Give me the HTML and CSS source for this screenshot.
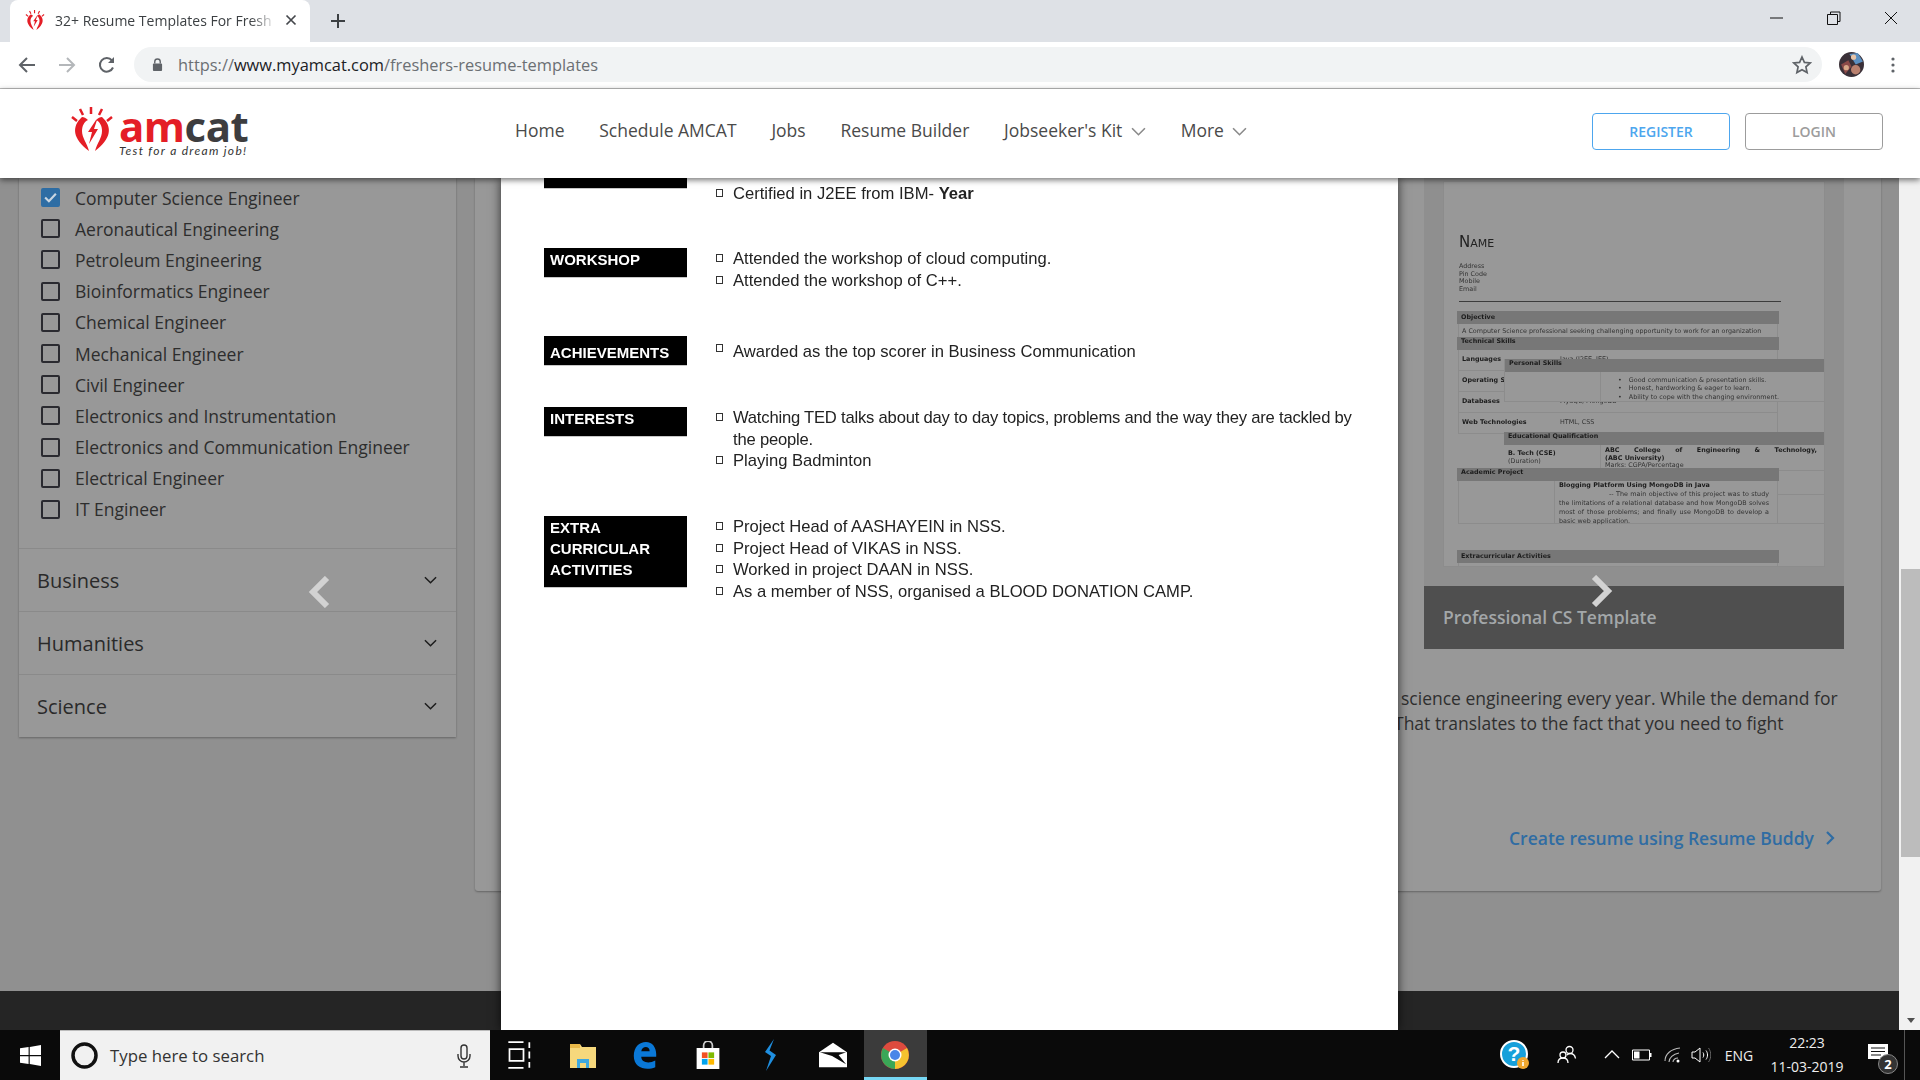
FILE: index.html
```html
<!DOCTYPE html>
<html lang="en">
<head>
  <meta charset="UTF-8">
  <title>32+ Resume Templates For Freshers</title>
  <link rel="stylesheet" href="styles.css">
</head>
<body>
  <svg class="defs" width="0" height="0">
    <symbol id="bulb" viewBox="0 0 42 44">
      <path d="M20 0v7M9 2l3 6M31 2l-3 6M1 10l5 4M41 10l-5 4" stroke="#e41e26" stroke-width="2.500" fill="none"/>
      <path d="M11 10C0 20 2 32 18 44 16 36 11 31 11 24c0-5 2-9 6-11-2-2-4-3-6-3z" fill="#e41e26"/>
      <path d="M31 10c11 10 9 22-7 34 2-8 7-13 7-20 0-5-2-9-6-11 2-2 4-3 6-3z" fill="#e41e26"/>
      <path d="M25 13l-8 12h4l-3 12 9-15h-4l3-9z" fill="#e41e26"/>
    </symbol>
  </svg>

  <div class="tabbar">
    <div class="tab">
      <svg class="favicon"><use href="#bulb"/></svg>
      <span class="tab-title">32+ Resume Templates For Fresh</span>
      <svg class="tab-close" viewBox="0 0 12 12"><path d="M1.500 1.500l9 9M10.500 1.500l-9 9" stroke="#45484c" stroke-width="1.700"/></svg>
    </div>
    <svg class="tab-new" viewBox="0 0 16 16"><path d="M8 1v14M1 8h14" stroke="#3c4043" stroke-width="2"/></svg>
    <div class="win-btns">
      <svg viewBox="0 0 14 14"><path d="M0 7h13" stroke="#111" stroke-width="1"/></svg>
      <svg viewBox="0 0 14 14"><path d="M3.500 3.500V1h9.500v9.500H10.500M.5 3.500h10v10H.5z" stroke="#111" fill="none"/></svg>
      <svg viewBox="0 0 14 14"><path d="M1 1l12 12M13 1L1 13" stroke="#111" fill="none"/></svg>
    </div>
  </div>

  <div class="toolbar">
    <svg class="tb-icon" viewBox="0 0 18 18"><path d="M17 9H2.500M9 2L2 9l7 7" stroke="#5f6368" stroke-width="2" fill="none"/></svg>
    <svg class="tb-icon" viewBox="0 0 18 18"><path d="M1 9h14.500M9 2l7 7-7 7" stroke="#b4b7ba" stroke-width="2" fill="none"/></svg>
    <svg class="tb-icon" viewBox="0 0 18 18"><path d="M15 11.500A6.800 6.800 0 1 1 14 4.500" stroke="#5f6368" stroke-width="2" fill="none"/><path d="M16 1v6h-6z" fill="#5f6368"/></svg>
    <div class="omnibox">
      <svg class="lock" viewBox="0 0 12 16"><path d="M3 7V5a3 3 0 0 1 6 0v2" stroke="#5f6368" stroke-width="1.500" fill="none"/><rect x="1" y="7" width="10" height="8" rx="1" fill="#5f6368"/></svg>
      <span class="url">https://<b>www.myamcat.com</b>/freshers-resume-templates</span>
      <svg class="star" viewBox="0 0 20 20"><path d="M10 2l2.400 5.400 5.800.6-4.300 3.900 1.200 5.700L10 14.700l-5.100 2.900 1.200-5.700L1.800 8l5.800-.6z" stroke="#5f6368" stroke-width="1.700" fill="none"/></svg>
    </div>
    <svg class="avatar" viewBox="0 0 24 24">
      <circle cx="12" cy="12" r="12" fill="#3a3038"/>
      <path d="M10 2l8-1 5 8-7 3z" fill="#5b8fc0"/>
      <path d="M2 12l7-4 3 6-6 7z" fill="#8a4a48"/>
      <circle cx="16" cy="17" r="4.500" fill="#b9806e"/>
      <circle cx="14" cy="5" r="2.500" fill="#e8c4a8"/>
      <circle cx="7" cy="15" r="2.500" fill="#d8a888"/>
    </svg>
    <svg class="menu-dots" viewBox="0 0 4 16"><circle cx="2" cy="2" r="1.600" fill="#5f6368"/><circle cx="2" cy="8" r="1.600" fill="#5f6368"/><circle cx="2" cy="14" r="1.600" fill="#5f6368"/></svg>
  </div>

  <header class="sitehead">
    <a class="logo">
      <svg class="logo-bulb"><use href="#bulb"/></svg>
      <div class="logo-words">
        <div class="logo-name"><span>am</span>cat</div>
        <div class="logo-tag">Test for a dream job!</div>
      </div>
    </a>
    <nav class="nav">
      <a>Home</a>
      <a>Schedule AMCAT</a>
      <a>Jobs</a>
      <a>Resume Builder</a>
      <a>Jobseeker's Kit <svg class="nav-caret" viewBox="0 0 14 8"><path d="M1 1l6 6 6-6" stroke="#8a8a8a" stroke-width="1.500" fill="none"/></svg></a>
      <a>More <svg class="nav-caret" viewBox="0 0 14 8"><path d="M1 1l6 6 6-6" stroke="#8a8a8a" stroke-width="1.500" fill="none"/></svg></a>
    </nav>
    <div class="head-btns">
      <button class="btn btn-reg">REGISTER</button>
      <button class="btn btn-login">LOGIN</button>
    </div>
  </header>

  <div class="viewport">
    <div class="page">
      <div class="page-main">
        <aside class="sidebar">
          <ul class="checks">
            <li class="checked"><i><svg viewBox="0 0 14 14"><path d="M2 7l3.500 3.500L12 3.500" stroke="#c9d6e2" stroke-width="2" fill="none"/></svg></i>Computer Science Engineer</li>
            <li><i></i>Aeronautical Engineering</li>
            <li><i></i>Petroleum Engineering</li>
            <li><i></i>Bioinformatics Engineer</li>
            <li><i></i>Chemical Engineer</li>
            <li><i></i>Mechanical Engineer</li>
            <li><i></i>Civil Engineer</li>
            <li><i></i>Electronics and Instrumentation</li>
            <li><i></i>Electronics and Communication Engineer</li>
            <li><i></i>Electrical Engineer</li>
            <li><i></i>IT Engineer</li>
          </ul>
          <div class="acc">Business <svg viewBox="0 0 14 8"><path d="M1 1l6 6 6-6" stroke="#1c1c1c" stroke-width="1.600" fill="none"/></svg></div>
          <div class="acc">Humanities <svg viewBox="0 0 14 8"><path d="M1 1l6 6 6-6" stroke="#1c1c1c" stroke-width="1.600" fill="none"/></svg></div>
          <div class="acc">Science <svg viewBox="0 0 14 8"><path d="M1 1l6 6 6-6" stroke="#1c1c1c" stroke-width="1.600" fill="none"/></svg></div>
        </aside>

        <main class="content">
          <div class="preview">
            <div class="preview-band">
              <div class="resume">
                <div class="rs-name">Name</div>
                <div class="rs-contact">Address<br>Pin Code<br>Mobile<br>Email</div>
                <div class="rs-rule"></div>
                <div class="rs-head rs-objective">Objective</div>
                <div class="rs-obj">A Computer Science professional seeking challenging opportunity to work for an organization</div>
                <div class="rs-head">Technical Skills</div>
                <div class="rs-row"><b>Languages</b><span>Java (J2EE, JEE)</span></div>
                <div class="rs-row"><b>Operating Systems</b><span>Windows</span></div>
                <div class="rs-row"><b>Databases</b><span>MySQL, MongoDB</span></div>
                <div class="rs-row"><b>Web Technologies</b><span>HTML, CSS</span></div>
                <div class="rs-head rs-academic">Academic Project</div>
                <div class="rs-project">
                  <div class="rs-project-text">
                    <b>Blogging Platform Using MongoDB in Java</b>
                    <p>-- The main objective of this project was to study the limitations of a relational database and how MongoDB solves most of those problems; and finally use MongoDB to develop a basic web application.</p>
                  </div>
                </div>
                <div class="rs-head rs-extra">Extracurricular Activities</div>
                <div class="rs-row rs-extra-row"></div>

                <section class="rs-over rs-personal">
                  <div class="rs-head">Personal Skills</div>
                  <div class="rs-over-body">
                    <ul>
                      <li>Good communication &amp; presentation skills.</li>
                      <li>Honest, hardworking &amp; eager to learn.</li>
                      <li>Ability to cope with the changing environment.</li>
                    </ul>
                  </div>
                </section>
                <section class="rs-over rs-edu">
                  <div class="rs-head">Educational Qualification</div>
                  <div class="rs-edu-row">
                    <div><b>B. Tech (CSE)</b><br>(Duration)</div>
                    <div><b class="rs-just">ABC College of Engineering &amp; Technology,</b><b>(ABC University)</b><br>Marks: CGPA/Percentage</div>
                  </div>
                  <div class="rs-edu-blank"></div>
                </section>
              </div>
            </div>
            <div class="preview-cap">Professional CS Template</div>
          </div>

          <p class="intro">
            <span>science engineering every year. While the demand for</span>
            <span class="intro-2">That translates to the fact that you need to fight</span>
          </p>
          <a class="create-link">Create resume using Resume Buddy
            <svg viewBox="0 0 10 16"><path d="M2 2l6 6-6 6" stroke="#2f6ca3" stroke-width="2.200" fill="none"/></svg>
          </a>
        </main>
      </div>
      <div class="sitefoot"></div>

      <svg class="car-arrow car-prev" viewBox="0 0 22 32"><path d="M19 2L5 16l14 14" stroke="#d2d2d2" stroke-width="6" fill="none"/></svg>
      <svg class="car-arrow car-next" viewBox="0 0 22 32"><path d="M3 2l14 14L3 30" stroke="#d2d2d2" stroke-width="6" fill="none"/></svg>

      <div class="modal">
        <div class="doc">
          <div class="doc-row doc-first">
            <div class="doc-label"></div>
            <ul class="doc-list"><li><span>Certified in J2EE from IBM- <b>Year</b></span></li></ul>
          </div>
          <div class="doc-row">
            <div class="doc-label">WORKSHOP</div>
            <ul class="doc-list">
              <li><span>Attended the workshop of cloud computing.</span></li>
              <li><span>Attended the workshop of C++.</span></li>
            </ul>
          </div>
          <div class="doc-row doc-achieve">
            <div class="doc-label">ACHIEVEMENTS</div>
            <ul class="doc-list"><li><span>Awarded as the top scorer in Business Communication</span></li></ul>
          </div>
          <div class="doc-row doc-interests">
            <div class="doc-label">INTERESTS</div>
            <ul class="doc-list">
              <li><span class="doc-tight">Watching TED talks about day to day topics, problems and the way they are tackled by the people.</span></li>
              <li><span>Playing Badminton</span></li>
            </ul>
          </div>
          <div class="doc-row">
            <div class="doc-label doc-label-tall">EXTRA<br>CURRICULAR<br>ACTIVITIES</div>
            <ul class="doc-list">
              <li><span>Project Head of AASHAYEIN in NSS.</span></li>
              <li><span>Project Head of VIKAS in NSS.</span></li>
              <li><span>Worked in project DAAN in NSS.</span></li>
              <li><span>As a member of NSS, organised a BLOOD DONATION CAMP.</span></li>
            </ul>
          </div>
        </div>
      </div>
    </div>

    <div class="scrollbar">
      <div class="thumb"></div>
      <div class="scroll-down"></div>
    </div>
  </div>

  <footer class="taskbar">
    <div class="start">
      <svg viewBox="0 0 22 22"><path d="M0 3.500l9-1.300v8.300H0zM10.200 2l11.800-2v10.500H10.200zM0 11.700h9V20L0 18.700zM10.200 11.700H22V22l-11.800-2z" fill="#fff"/></svg>
    </div>
    <div class="search">
      <svg class="cortana" viewBox="0 0 27 27"><circle cx="13.500" cy="13.500" r="11.500" stroke="#111" stroke-width="3.500" fill="none"/></svg>
      <span>Type here to search</span>
      <svg class="mic" viewBox="0 0 14 24"><rect x="4" y="1" width="6" height="14" rx="3" stroke="#333" stroke-width="1.400" fill="none"/><path d="M1 10v2a6 6 0 0 0 12 0v-2M7 18v4M3 23h8" stroke="#333" stroke-width="1.400" fill="none"/></svg>
    </div>
    <div class="task-apps">
      <div class="app"><svg viewBox="0 0 20 24"><path d="M0 1h13M0 23h13M1 7h12v10H1zM18 1v5M18 9v6M18 18v5" stroke="#fff" stroke-width="1.500" fill="none"/></svg></div>
      <div class="app"><svg viewBox="0 0 28 28"><path d="M1 3h10l2 3h14v21H1z" fill="#f6d87c"/><path d="M1 3h10v4H1z" fill="#e9b949"/><path d="M8 27v-9h12v9h-3v-5h-6v5z" fill="#3fa9e0"/></svg></div>
      <div class="app"><svg viewBox="0 0 26 30"><path d="M1 16C1 6 7 1 14 1c7 0 11 6 11 13v3H9c0 6 8 8 15 4v7c-10 4-23 1-23-12zM9 11h9c0-6-8-6-9 0z" fill="#0a78d7"/></svg></div>
      <div class="app"><svg viewBox="0 0 28 32"><path d="M9 9V5a5 5 0 0 1 10 0v4" stroke="#ccc" stroke-width="2" fill="none"/><rect x="1" y="8" width="26" height="24" fill="#fff"/><rect x="7" y="13" width="6.500" height="6.500" fill="#f25022"/><rect x="14.500" y="13" width="6.500" height="6.500" fill="#7fba00"/><rect x="7" y="20.500" width="6.500" height="6.500" fill="#00a4ef"/><rect x="14.500" y="20.500" width="6.500" height="6.500" fill="#ffb900"/></svg></div>
      <div class="app app-bolt"><svg viewBox="0 0 16 32"><path d="M12 0L3 13l6 4-5 15L14 16 7.500 11.500z" fill="#1f8fe0"/></svg></div>
      <div class="app"><svg viewBox="0 0 30 26"><path d="M0 10L15 0l15 10v16H0z" fill="#fff"/><path d="M1 10h28l-8 3 8 10-15-9z" fill="#0a0a0a"/></svg></div>
      <div class="app app-on"><svg viewBox="0 0 28 28"><circle cx="14" cy="14" r="14" fill="#dd4b3e"/><path d="M14 14L26 7A14 14 0 0 1 14 28z" fill="#f5c22f"/><path d="M14 14L14 28A14 14 0 0 1 2 7z" fill="#3aa757"/><circle cx="14" cy="14" r="6.500" fill="#fff"/><circle cx="14" cy="14" r="5" fill="#4a86e8"/></svg></div>
    </div>
    <div class="tray">
      <div class="tray-help"><svg viewBox="0 0 30 30"><circle cx="14" cy="14" r="13" fill="#17a0da" stroke="#fff" stroke-width="2"/><text x="14" y="21" text-anchor="middle" class="help-q">?</text><circle cx="23" cy="23" r="6" fill="#f0a830"/><path d="M23 20v.800M23 22v4" stroke="#fff" stroke-width="1.600"/></svg></div>
      <div class="tray-people"><svg viewBox="0 0 20 20"><circle cx="12.500" cy="5" r="3.500" stroke="#fff" stroke-width="1.300" fill="none"/><circle cx="6" cy="10" r="3" stroke="#fff" stroke-width="1.300" fill="none"/><path d="M1 18c0-3 2-5 5-5s5 2 5 5M10 10c1-1 2-1.500 3-1.500 3 0 5 2 5.500 5" stroke="#fff" stroke-width="1.300" fill="none"/></svg></div>
      <div class="tray-chev"><svg viewBox="0 0 16 10"><path d="M1 8l7-7 7 7" stroke="#fff" stroke-width="1.300" fill="none"/></svg></div>
      <div class="tray-batt"><svg viewBox="0 0 20 12"><path d="M.5 1h17v10H.5z" stroke="#fff" fill="none"/><rect x="2" y="2.500" width="5.500" height="7" fill="#fff"/><rect x="18" y="4" width="1.500" height="4" fill="#fff"/></svg></div>
      <div class="tray-wifi"><svg viewBox="0 0 18 16"><path d="M1 14C1 7 7 2 16 1M5 15c0-4 4-8 10-9M9 15c0-2 2-4 5-4" stroke="#bbb" stroke-width="1.100" fill="none"/><circle cx="14" cy="14" r="1.500" fill="#fff"/></svg></div>
      <div class="tray-vol"><svg viewBox="0 0 20 16"><path d="M1 5h3l5-4v14l-5-4H1z" stroke="#fff" fill="none"/><path d="M12 5.500c1 1.500 1 3.500 0 5M15 3.500c2 2.500 2 6.500 0 9" stroke="#fff" fill="none"/><path d="M17.500 1c3 4 3 10 0 14" stroke="#666" fill="none"/></svg></div>
      <div class="tray-eng">ENG</div>
      <div class="tray-clock"><span>22:23</span><span>11-03-2019</span></div>
      <div class="tray-notif">
        <svg viewBox="0 0 20 18"><path d="M0 0h20v15H0z" fill="#fff"/><path d="M3 4h14M3 7.500h14M3 11h10" stroke="#111" stroke-width="1.100"/></svg>
        <span class="notif-badge">2</span>
      </div>
      <div class="tray-show"></div>
    </div>
  </footer>
</body>
</html>
```

FILE: styles.css
```css
* {
  box-sizing: border-box;
}
html, body {
  margin: 0;
  height: 1080px;
  overflow: hidden;
}
body {
  width: 1920px;
  display: flex;
  flex-direction: column;
  font-family: "Open Sans", "Liberation Sans", sans-serif;
  background: #fff;
}
ul {
  margin: 0;
  padding: 0;
  list-style: none;
}
.defs {
  position: absolute;
}

/* browser chrome */
.tabbar {
  height: 42px;
  background: #dee1e6;
  display: flex;
  align-items: flex-end;
  padding-left: 10px;
  flex: none;
}
.tab {
  width: 300px;
  height: 42px;
  background: #fff;
  border-radius: 8px 8px 0 0;
  display: flex;
  align-items: center;
  padding: 0 0 2px 15px;
}
.favicon {
  width: 20px;
  height: 20px;
  flex: none;
}
.tab-title {
  width: 222px;
  margin-left: 10px;
  font-size: 14px;
  color: #3c4043;
  white-space: nowrap;
  overflow: hidden;
  -webkit-mask-image: linear-gradient(to right, #000 88%, transparent);
  mask-image: linear-gradient(to right, #000 88%, transparent);
}
.tab-close {
  width: 12px;
  height: 12px;
  margin-left: 8px;
}
.tab-new {
  width: 16px;
  height: 16px;
  margin: 0 0 13px 20px;
}
.win-btns {
  margin-left: auto;
  height: 42px;
  display: flex;
  align-items: center;
  padding: 0 22px 6px 0;
  gap: 43px;
}
.win-btns svg {
  width: 14px;
  height: 14px;
}
.toolbar {
  height: 47px;
  background: #fff;
  border-bottom: 1px solid #bcbcbc;
  display: flex;
  align-items: center;
  padding: 0 0 1px 18px;
  flex: none;
}
.tb-icon {
  width: 18px;
  height: 18px;
  margin-right: 22px;
}
.omnibox {
  width: 1688px;
  height: 35px;
  margin-left: -4px;
  background: #f1f3f4;
  border-radius: 18px;
  display: flex;
  align-items: center;
  padding-left: 18px;
}
.lock {
  width: 11px;
  height: 15px;
}
.url {
  margin-left: 15px;
  font-size: 16.400px;
  color: #6b6f73;
}
.url b {
  font-weight: 400;
  color: #202124;
}
.star {
  width: 20px;
  height: 20px;
  margin-left: auto;
  margin-right: 10px;
}
.avatar {
  width: 25px;
  height: 25px;
  margin-left: 17px;
}
.menu-dots {
  width: 4px;
  height: 16px;
  margin-left: 27px;
}

/* site header */
.sitehead {
  height: 89px;
  background: #fff;
  display: flex;
  align-items: center;
  flex: none;
  position: relative;
  z-index: 5;
  box-shadow: 0 2px 6px rgba(0, 0, 0, 0.55);
}
.logo {
  display: flex;
  margin-left: 71px;
  width: 180px;
  flex: none;
  align-items: flex-start;
  padding-bottom: 4px;
}
.logo-bulb {
  width: 42px;
  height: 44px;
  flex: none;
}
.logo-words {
  margin-left: 6px;
}
.logo-name {
  font-size: 42px;
  font-weight: 700;
  line-height: 37px;
  color: #3d3d3f;
  letter-spacing: -0.5px;
}
.logo-name span {
  color: #e41e26;
}
.logo-tag {
  font-family: Lato, "Open Sans", sans-serif;
  font-style: italic;
  font-size: 12px;
  line-height: 12px;
  letter-spacing: 1.300px;
  color: #333;
  white-space: nowrap;
  margin-top: 1px;
}
.nav {
  margin-left: 264px;
  display: flex;
  gap: 34.800px;
  font-size: 17.500px;
  color: #4a4a4a;
  padding-bottom: 7px;
}
.nav a {
  white-space: nowrap;
}
.nav-caret {
  width: 15px;
  height: 9px;
  margin-left: 4px;
  vertical-align: 1px;
}
.head-btns {
  margin-left: auto;
  margin-right: 37px;
  display: flex;
  gap: 15px;
  padding-bottom: 4px;
}
.btn {
  width: 138px;
  height: 37px;
  background: #fff;
  border-radius: 4px;
  font-family: inherit;
  font-size: 14px;
  font-weight: 600;
  padding: 0;
}
.btn-reg {
  border: 1px solid #4da6ee;
  color: #4da6ee;
}
.btn-login {
  border: 1px solid #9c9c9c;
  color: #9c9c9c;
}

/* dimmed page */
.viewport {
  flex: 1;
  display: flex;
  min-height: 0;
}
.page {
  flex: 1;
  position: relative;
  overflow: hidden;
  background: #909090;
  display: flex;
  flex-direction: column;
}
.page-main {
  flex: 1;
  display: flex;
  align-items: flex-start;
  gap: 19px;
  padding-left: 19px;
}
.sitefoot {
  height: 39px;
  background: #252525;
  flex: none;
}
.sidebar {
  width: 437px;
  background: #989898;
  box-shadow: 0 1px 2px rgba(0, 0, 0, 0.3);
  padding-top: 4px;
  flex: none;
}
.checks {
  padding: 0 0 23px 22px;
}
.checks li {
  height: 31.200px;
  display: flex;
  align-items: center;
  font-size: 17.500px;
  color: #2d2d2d;
  white-space: nowrap;
}
.checks i {
  width: 19px;
  height: 19px;
  border: 2px solid #2a2a30;
  border-radius: 2px;
  margin-right: 15px;
  flex: none;
  display: flex;
}
.checks .checked i {
  background: #2e6da4;
  border-color: #2e6da4;
}
.acc {
  height: 63px;
  border-top: 1px solid #8a8a8a;
  display: flex;
  align-items: center;
  justify-content: space-between;
  padding: 0 19px 0 18px;
  font-size: 20px;
  color: #2a2a2a;
}
.acc svg {
  width: 13px;
  height: 8px;
}
.content {
  width: 1406px;
  height: 713px;
  background: #989898;
  border-radius: 0 0 3px 3px;
  box-shadow: 0 1px 2px rgba(0, 0, 0, 0.3);
  flex: none;
  position: relative;
}
.preview {
  width: 420px;
  margin-left: 949px;
}
.preview-band {
  height: 408px;
  background: #8f8f8f;
  padding: 3px 19px 0;
}
.preview-cap {
  height: 63px;
  background: #4f4f4f;
  color: #a3a7a9;
  font-size: 17.500px;
  font-weight: 600;
  line-height: 63px;
  padding-left: 19px;
}
.intro {
  margin: 37px 0 0 926px;
  font-size: 17.500px;
  line-height: 25px;
  color: #2f2f2f;
  white-space: nowrap;
}
.intro span {
  display: block;
}
.intro-2 {
  margin-left: -7px;
}
.create-link {
  display: flex;
  align-items: center;
  margin: 90px 0 0 1034px;
  font-size: 17.500px;
  font-weight: 600;
  color: #2f6ca3;
  white-space: nowrap;
}
.create-link svg {
  width: 10px;
  height: 16px;
  margin-left: 11px;
}

/* scaled-down resume picture in the carousel */
.resume {
  width: 382px;
  height: 386px;
  background: #989898;
  border: 1px solid #8c8c8c;
  position: relative;
  overflow: hidden;
  font-family: "DejaVu Sans", sans-serif;
  font-size: 6.400px;
  line-height: 7.700px;
  color: #333;
  padding: 0 0 0 15px;
  filter: blur(0.45px);
}
.rs-name {
  font-size: 15px;
  line-height: 18px;
  font-variant: small-caps;
  color: #222;
  padding-top: 51px;
  height: 69px;
}
.rs-contact {
  margin-top: 12px;
}
.rs-rule {
  width: 322px;
  height: 1px;
  background: #3c3c3c;
  margin-top: 7px;
}
.rs-head {
  width: 322px;
  height: 13px;
  background: #777;
  font-weight: 700;
  color: #1c1c1c;
  line-height: 8px;
  padding-left: 4px;
  margin-left: -2px;
}
.rs-objective {
  margin-top: 9px;
  line-height: 12px;
}
.rs-obj {
  width: 320px;
  height: 13px;
  padding-left: 3px;
  line-height: 14px;
  white-space: nowrap;
  margin-left: -1px;
  border-left: 1px solid #8c8c8c;
  border-right: 1px solid #8c8c8c;
}
.rs-row {
  width: 320px;
  height: 21px;
  margin-left: -1px;
  display: grid;
  grid-template-columns: 95px 1fr;
  align-items: center;
  border: 1px solid #8c8c8c;
  border-top: 0;
  padding-left: 3px;
  white-space: nowrap;
}
.rs-row b {
  color: #1c1c1c;
}
.rs-row span {
  padding-left: 3px;
}
.rs-academic {
  position: relative;
  z-index: 2;
  margin-top: 34px;
}
.rs-project {
  position: relative;
  z-index: 2;
  width: 320px;
  height: 43px;
  margin-left: -1px;
  background: #989898;
  border: 1px solid #8c8c8c;
  border-top: 0;
  padding-left: 95px;
}
.rs-project-text {
  border-left: 1px solid #8c8c8c;
  height: 42px;
  padding: 0 8px 0 4px;
  line-height: 9px;
}
.rs-project-text b {
  color: #1c1c1c;
  display: block;
  white-space: nowrap;
}
.rs-project-text p {
  margin: 0;
  text-align: justify;
  text-indent: 50px;
}
.rs-extra {
  margin-top: 26px;
  line-height: 12px;
}
.rs-extra-row {
  height: 10px;
}
.rs-over {
  position: absolute;
  left: 60px;
  width: 322px;
  background: #989898;
}
.rs-over .rs-head {
  margin-left: 0;
}
.rs-personal {
  top: 177px;
  height: 43px;
  border-bottom: 1px solid #8c8c8c;
  border-left: 1px solid #8c8c8c;
}
.rs-over-body {
  margin-left: 95px;
  height: 29px;
  border-left: 1px solid #8c8c8c;
  padding: 4px 0 0 17px;
  line-height: 8.400px;
  white-space: nowrap;
}
.rs-over-body li::before {
  content: "•";
  margin-right: 7px;
}
.rs-edu {
  top: 250px;
  height: 92px;
  border-bottom: 1px solid #8c8c8c;
  z-index: 1;
}
.rs-edu-row {
  display: grid;
  grid-template-columns: 96px 1fr;
  height: 26px;
  overflow: hidden;
  border-bottom: 1px solid #8c8c8c;
}
.rs-edu-row > div {
  padding-left: 4px;
}
.rs-edu-row > div:first-child {
  padding-top: 5px;
}
.rs-edu-row > div:last-child {
  border-left: 1px solid #8c8c8c;
  padding-right: 9px;
  padding-top: 2px;
}
.rs-edu-row b {
  color: #1c1c1c;
}
.rs-just {
  display: block;
  text-align: justify;
  text-align-last: justify;
}
.rs-edu-blank {
  height: 24px;
  border-bottom: 1px solid #8c8c8c;
}

/* carousel arrows sit over the page */
.car-arrow {
  position: absolute;
  width: 22px;
  height: 32px;
}
.car-prev {
  left: 308px;
  top: 398px;
}
.car-next {
  left: 1591px;
  top: 397px;
}

/* resume modal */
.modal {
  position: absolute;
  left: 501px;
  top: 0;
  bottom: 0;
  width: 897px;
  background: #fff;
  overflow: hidden;
  box-shadow: 0 0 10px rgba(0, 0, 0, 0.7);
  z-index: 2;
}
.doc {
  padding-left: 43px;
  font-family: "Liberation Sans", Arial, sans-serif;
  color: #222;
  filter: blur(0.3px);
}
.doc-row {
  display: grid;
  grid-template-columns: 143px 642px;
  column-gap: 29px;
  align-items: start;
  margin-top: 45px;
}
.doc-first {
  margin-top: -19px;
}
.doc-row:nth-child(2) {
  margin-top: 44px;
}
.doc-interests {
  margin-top: 41px;
}
.doc-label {
  height: 30px;
  background: #000;
  border: 1px solid #c8c8c8;
  border-width: 0 0 1px;
  color: #fff;
  font-size: 15px;
  font-weight: 700;
  line-height: 21px;
  padding: 1px 0 0 6px;
}
.doc-label-tall {
  height: 72px;
  padding-top: 1px;
}
.doc-achieve .doc-label {
  padding-top: 6px;
}
.doc-achieve .doc-list {
  padding-top: 5px;
}
.doc-first .doc-list {
  padding-top: 24px;
}
.doc-list li {
  display: flex;
  font-size: 16.600px;
  line-height: 21.400px;
}
.doc-list li::before {
  content: "";
  width: 5px;
  height: 6px;
  border: 1px solid #333;
  margin: 6px 10px 0 0;
  flex: none;
}
.doc-achieve li::before {
  margin-top: 3px;
}
.doc-tight {
  letter-spacing: -0.2px;
}

/* scrollbar */
.scrollbar {
  width: 21px;
  background: #f1f1f1;
  display: flex;
  flex-direction: column;
  align-items: flex-end;
  flex: none;
}
.thumb {
  width: 19px;
  height: 288px;
  margin-top: 391px;
  background: #bcbcbc;
}
.scroll-down {
  margin: auto 5px 7px 0;
  border-left: 4.500px solid transparent;
  border-right: 4.500px solid transparent;
  border-top: 5px solid #505050;
}

/* windows taskbar */
.taskbar {
  height: 50px;
  background: #0a0a0a;
  display: flex;
  align-items: stretch;
  flex: none;
  position: relative;
  z-index: 6;
}
.start {
  width: 60px;
  display: flex;
  align-items: center;
  justify-content: center;
}
.start svg {
  width: 21px;
  height: 21px;
}
.search {
  width: 430px;
  background: #f1f1f1;
  border-top: 1px solid #bbb;
  display: flex;
  align-items: center;
  padding-left: 11px;
  font-size: 16.800px;
  color: #333;
}
.cortana {
  width: 27px;
  height: 27px;
  margin-right: 12px;
}
.mic {
  width: 14px;
  height: 24px;
  margin-left: auto;
  margin-right: 19px;
}
.task-apps {
  display: flex;
  margin-left: -1px;
}
.app {
  width: 62.500px;
  display: flex;
  align-items: center;
  justify-content: center;
}
.app svg {
  height: 28px;
  width: 28px;
}
.app-bolt svg {
  height: 32px;
}
.app-on {
  background: #3b3b3b;
  border-bottom: 3px solid #76d7f4;
  padding-top: 3px;
}
.tray {
  margin-left: auto;
  width: 430px;
  display: flex;
  color: #fff;
  flex: none;
}
.tray > div {
  display: flex;
  align-items: center;
  justify-content: center;
}
.tray-help {
  width: 50px;
}
.tray-help svg {
  width: 30px;
  height: 30px;
}
.help-q {
  font-family: "Liberation Sans", sans-serif;
  font-weight: 700;
  font-size: 21px;
  fill: #fff;
}
.tray-people {
  width: 54px;
}
.tray-people svg {
  width: 20px;
  height: 20px;
}
.tray-chev {
  width: 36px;
}
.tray-chev svg {
  width: 16px;
  height: 10px;
}
.tray-batt {
  width: 24px;
}
.tray-batt svg {
  width: 20px;
  height: 12px;
}
.tray-wifi {
  width: 38px;
}
.tray-wifi svg {
  width: 18px;
  height: 16px;
}
.tray-vol {
  width: 18px;
}
.tray-vol svg {
  width: 20px;
  height: 16px;
  flex: none;
}
.tray-eng {
  width: 58px;
  font-size: 14px;
  color: #eee;
}
.tray > .tray-clock {
  width: 78px;
  flex-direction: column;
  font-size: 14px;
  line-height: 24px;
  color: #eee;
}
.tray-notif {
  width: 64px;
  position: relative;
}
.tray-notif svg {
  width: 20px;
  height: 18px;
  margin-top: -5px;
}
.notif-badge {
  position: absolute;
  left: 32px;
  top: 24px;
  width: 20px;
  height: 20px;
  border-radius: 50%;
  background: #333;
  border: 1px solid #888;
  font-size: 13px;
  font-weight: 700;
  line-height: 18px;
  text-align: center;
}
.tray-show {
  width: 10px;
  border-left: 1px solid #555;
  margin-left: -6px;
}
```
